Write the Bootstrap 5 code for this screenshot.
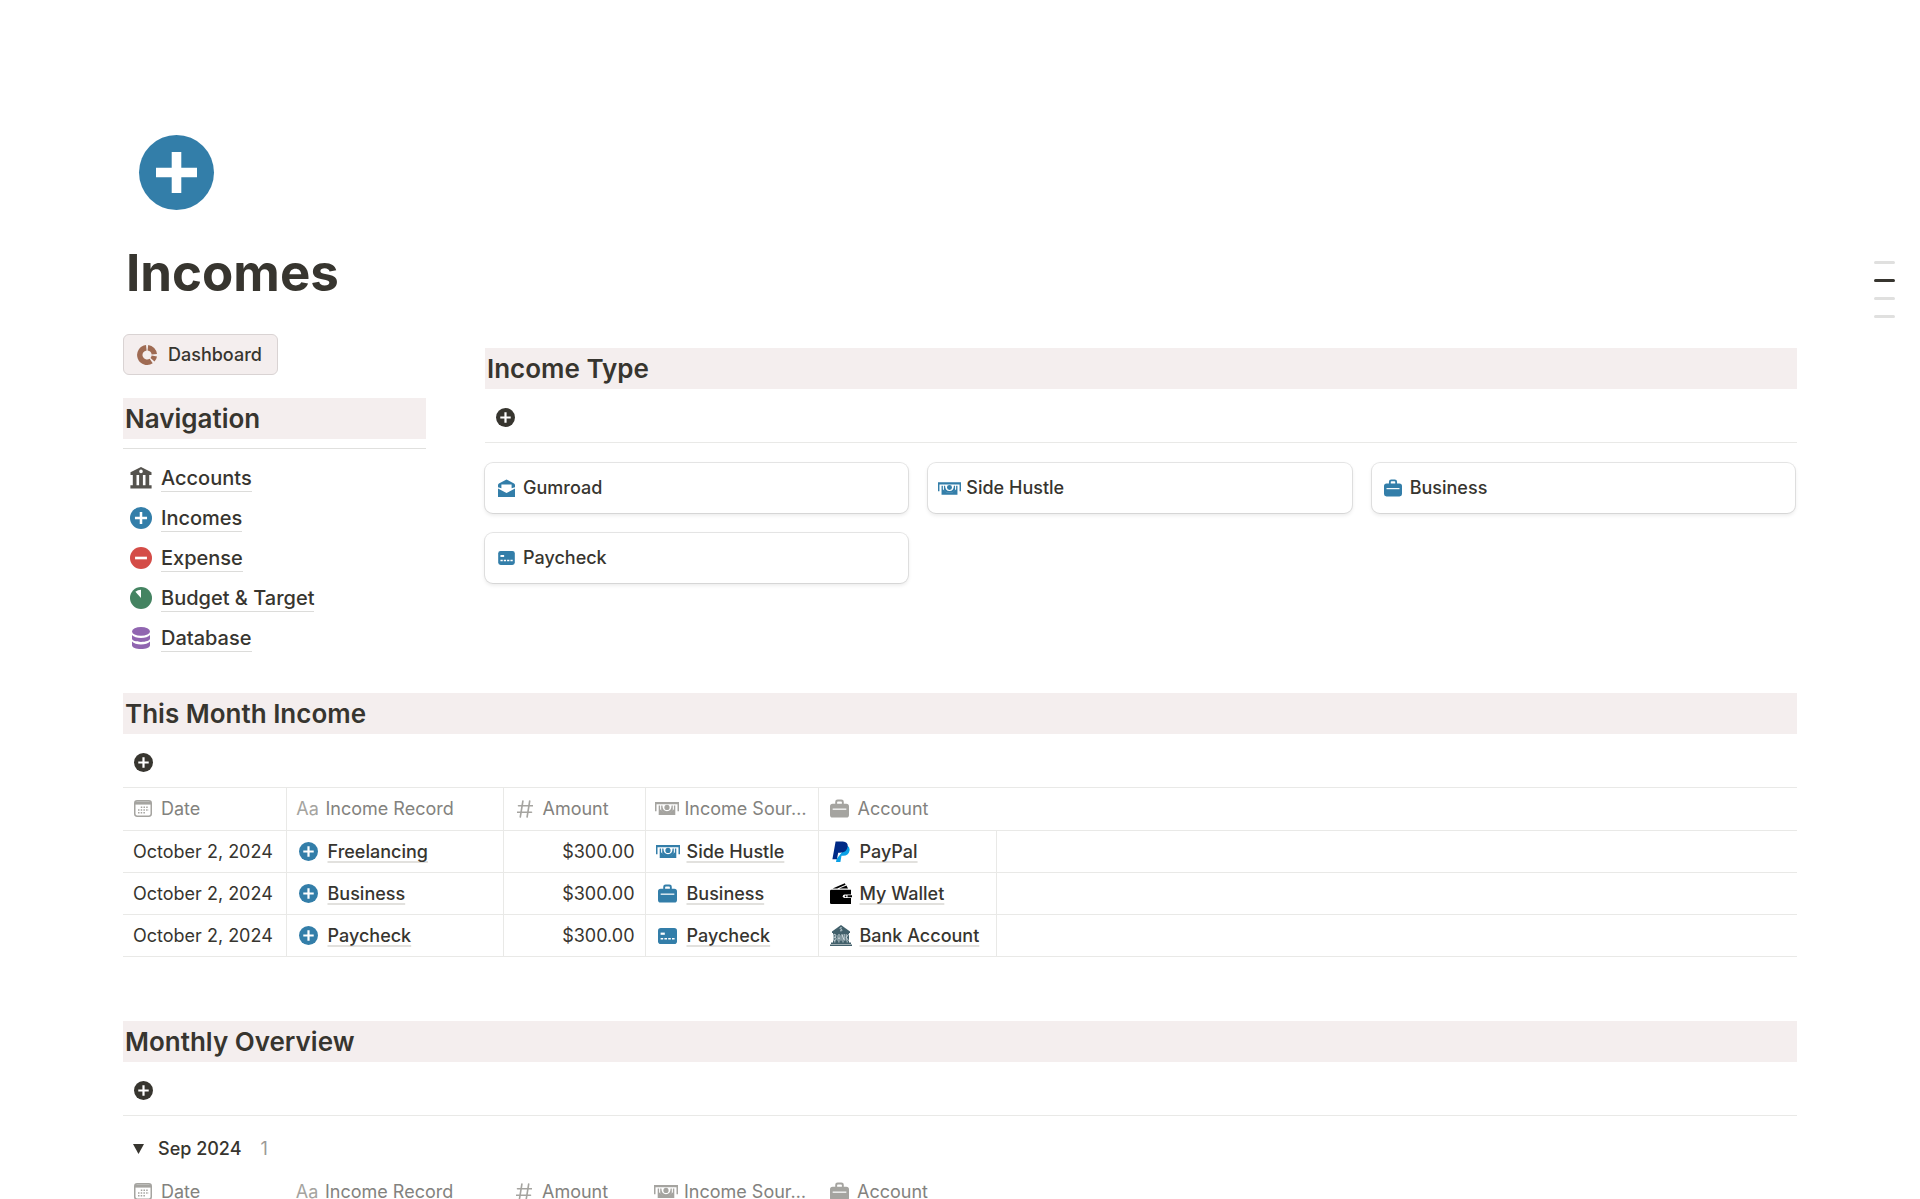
<!DOCTYPE html>
<html lang="en">
<head>
<meta charset="utf-8">
<meta name="viewport" content="width=device-width, initial-scale=1">
<title>Incomes</title>
<link href="https://cdn.jsdelivr.net/npm/bootstrap@5.3.0/dist/css/bootstrap.min.css" rel="stylesheet">
<style>
  :root { --ink:#37352f; --blue:#337ea9; --line:#e9e9e7; --tint:#f4eeee; --muted:#a5a4a0; }
  body { font-family: Inter, "Liberation Sans", sans-serif; color: var(--ink); font-size: 18px; line-height: 24px; background:#fff; }
  a { color: inherit; text-decoration: none; }
  svg { display: block; flex: none; overflow: visible; }
  .page { padding: 128px 123px 0; }
  .page-icon { margin-left: 9px; color: var(--blue); }
  .page-title { font-size: 51px; line-height: 62px; font-weight: 700; margin: 24px 0 30px; padding-left: 3px; }
  .side { flex: 0 0 303px; }
  .types { padding-top: 14px; }
  .columns { gap: 59px; margin-bottom: 35px; }
  .dash-btn { background: var(--tint); border: 1px solid #d9d3d3; border-radius: 6px; height: 41px; padding: 0 15px 0 13px; gap: 11px; font-weight: 500; color: var(--ink); margin-bottom: 23px; }
  .band { background: var(--tint); font-size: 26px; line-height: 35px; font-weight: 600; margin: 0; padding: 3px 2px; }
  .side-list { border-top: 1px solid #e0e0de; margin-top: 9px; padding-top: 9px; }
  .side-list li { height: 40px; padding-left: 7px; gap: 9px; font-size: 20px; font-weight: 500; }
  .side-list a { border-bottom: 1px solid #dcdcda; line-height: 26px; }
  .add-bar { height: 54px; padding: 4px 0 0 11px; border-bottom: 1px solid var(--line); }
  .add-btn { border: 0; background: none; padding: 0; color: var(--ink); }
  .type-grid { display: grid; grid-template-columns: repeat(3, 1fr); gap: 20px; padding-top: 20px; margin-right: 2px; }
  .type-card { height: 50px; border-radius: 8px; gap: 7px; padding-left: 11px; font-weight: 500; box-shadow: 0 0 0 1px rgba(15,15,15,.1), 0 2px 4px rgba(15,15,15,.1); }
  .slot { flex: none; width: 20px; display: flex; justify-content: center; align-items: center; }
  .records { width: 100%; table-layout: fixed; border-collapse: collapse; }
  .records th { height: 42px; font-weight: 400; color: #83827e; padding: 0 0 0 11px; white-space: nowrap; }
  .records th .slot { color: var(--muted); }
  .records td { height: 42px; padding: 1px 10px 0 11px; border-top: 1px solid var(--line); border-bottom: 1px solid var(--line); border-right: 1px solid var(--line); white-space: nowrap; }
  .records th:first-child, .records td:first-child { padding-left: 10px; }
  .records td:last-child { border-right: 0; }
  .ruled th { border-right: 1px solid var(--line); }
  .ruled th:nth-last-child(-n+2) { border-right: 0; }
  .cell { display: flex; align-items: center; gap: 8px; }
  td .cell .slot { width: 22px; }
  .in-blue { color: var(--blue); }
  td a { font-weight: 500; text-decoration: underline; text-decoration-color: #e2e1de; text-decoration-thickness: 2px; text-underline-offset: 3px; text-decoration-skip-ink: none; }
  .c-date { width: 163px; } .c-rec { width: 217px; } .c-amt { width: 142px; } .c-src { width: 173px; } .c-acc { width: 178px; }
  .month-gap { margin-top: 64px; }
  .group-row { height: 55px; padding: 12px 0 0 10px; }
  .group-toggle { margin-right: 14px; }
  .group-name { font-weight: 500; }
  .group-count { color: #9b9a97; margin-left: 19px; }
  .toc { position: absolute; top: 261px; right: 25px; width: 21px; gap: 15px; }
  .toc a { height: 3px; border-radius: 2px; background: #e0e0df; }
  .toc a.current { background: #37352f; }
</style>
<script src="https://cdn.jsdelivr.net/npm/bootstrap@5.3.0/dist/js/bootstrap.bundle.min.js"></script>
</head>
<body class="vh-100 overflow-hidden position-relative">

<svg width="0" height="0" class="position-absolute" aria-hidden="true">
  <symbol id="plus" viewBox="0 0 20 20"><circle cx="10" cy="10" r="10" fill="currentColor"/><path d="M10 4.500v11M4.500 10h11" stroke="#fff" stroke-width="2.300"/></symbol>
  <symbol id="minus" viewBox="0 0 20 20"><circle cx="10" cy="10" r="10" fill="currentColor"/><path d="M4.600 10h10.800" stroke="#fff" stroke-width="2.400"/></symbol>
  <symbol id="pie" viewBox="0 0 20 20"><circle cx="10" cy="10" r="10" fill="currentColor"/><path d="M10 10V2.400A7.600 7.600 0 0 0 4.900 4.400z" fill="#fff"/></symbol>
  <symbol id="donut" viewBox="0 0 20 20"><g fill="none" stroke="currentColor" stroke-width="5.400"><path d="M9.300 2.700A7.300 7.300 0 1 0 14.200 16"/><path d="M10.900 2.700A7.300 7.300 0 0 1 17.300 9.300"/><path d="M17.300 11A7.300 7.300 0 0 1 15.500 14.800"/></g></symbol>
  <symbol id="bank" viewBox="0 0 22 22"><path fill="currentColor" fill-rule="evenodd" d="M11 0 21.500 5.200V8H.5V5.200zM11 2.600a1.800 1.800 0 1 0 0 3.600 1.800 1.800 0 0 0 0-3.600z"/><path fill="currentColor" d="M2.800 7.500h3.700v11H2.800zM9.100 7.500h3.800v11H9.100zM15.500 7.500h3.700v11h-3.700zM.4 18.200h21.200v3.300H.4z"/></symbol>
  <symbol id="stack" viewBox="0 0 18 22"><g fill="currentColor"><ellipse cx="9" cy="4.400" rx="9" ry="4.400"/><path d="M0 8c1.600 2 5 2.900 9 2.900S16.400 10 18 8v3.600c0 2-4 3.400-9 3.400s-9-1.400-9-3.400z"/><path d="M0 14.600c1.600 2 5 2.900 9 2.900s7.400-.9 9-2.900v3.600c0 2.200-4 3.800-9 3.800s-9-1.600-9-3.800z"/></g></symbol>
  <symbol id="mail" viewBox="0 0 18 20"><path fill="currentColor" d="M9 .5 17 4.700q1 .6 1 1.600V19H0V6.300q0-1 1-1.600z"/><path fill="#fff" d="M3.600 5.800h10.800v4L18 8.600V10l-9 4.800L0 10V8.600l3.600 1.200z"/></symbol>
  <symbol id="cash" viewBox="0 0 24 13"><path fill="currentColor" d="M0 0h24v9.300h-1.500V2.300h-21v7H0z"/><path fill="currentColor" d="M3.700 3.500h1.400v3.800l3.600 3.400h6.600l3.600-3.400V3.500h1.400V13H3.700z"/><path fill="currentColor" d="M6.200 3.500h1.200q.2 5.700 4.600 5.700t4.600-5.700h1.200v5.200L15.500 11h-7L6.200 8.700z"/><circle cx="12" cy="5.400" r="2.600" fill="currentColor"/></symbol>
  <symbol id="case" viewBox="0 0 20 20"><path fill="currentColor" d="M5.500 5V3Q5.500.5 8 .5h4q2.500 0 2.500 2.500v2h2.700Q20 5 20 7.800v9q0 2.700-2.800 2.700H2.800Q0 19.500 0 16.800v-9Q0 5 2.800 5zm2 0h5V3.300q0-.8-.8-.8H8.300q-.8 0-.8.800z"/><path d="M2.800 10.700h14.400" stroke="#fff" stroke-width="1.300"/></symbol>
  <symbol id="credit" viewBox="0 0 19 16"><rect width="19" height="16" rx="2.800" fill="currentColor"/><path d="M2.600 5.700h4.200" stroke="#fff" stroke-width="2.200"/><path d="M2.600 10.800h14" stroke="#fff" stroke-width="1.600" stroke-dasharray="2.600 1.200"/></symbol>
  <symbol id="calendar" viewBox="0 0 18 17"><rect x=".75" y=".75" width="16.500" height="15.500" rx="2.400" fill="none" stroke="currentColor" stroke-width="1.500"/><path d="M1 1.500h16V4.600H1z" fill="currentColor"/><path d="M6.800 7.300h8M4 10h11M4 12.700h8" stroke="currentColor" stroke-width="1.500" stroke-dasharray="1.500 1.200"/></symbol>
  <symbol id="hash" viewBox="0 0 16 18"><path d="M5.900 1 3.300 17M12.700 1l-2.600 16M1.500 5.800h14M.5 12.200h14" stroke="currentColor" stroke-width="1.600" stroke-linecap="round"/></symbol>
  <symbol id="paypal" viewBox="0 0 18 21"><path fill="#0aa0e6" d="M15.200 4.500q3 1.600 2.300 5.200-1 5.100-6.400 5.100H9.500L8.400 21H4l.6-3z"/><path fill="#002a86" d="M3.600.5h7.200q5.400.3 4.900 5-.9 6.200-7.600 6.200H6.200L4.900 18.300H.4z"/></symbol>
  <symbol id="wallet" viewBox="0 0 22 21"><path d="M0 8Q0 6.800 1.300 6.800H21V21H1.300Q0 21 0 19.700z"/><path d="M14.600 11.500H22v3.600h-7.400q-1.800 0-1.800-1.800t1.800-1.800z" fill="#fff"/><circle cx="15.600" cy="13.300" r=".9"/><path d="M17.500 12.300H22v2h-4.500zM2.600 5.600 14.800.2l.8 1.600-8.400 3.800zM9.300 5.600l7.200-3.100 1.500 3.100z"/></symbol>
  <symbol id="bankhouse" viewBox="0 0 22 21"><g fill="#42606b"><path d="M11 0 20 6.500V8H2V6.500z"/><path d="M3 8h16v10H3z"/><path d="M1 17.400h20V19H1zM0 19.500h22V21H0z"/></g><path d="M4.800 15.500v2M8.900 15.500v2M13 15.500v2M17.200 15.500v2" stroke="#b9c9cf" stroke-width="1"/><path d="M3.700 9.400v6h1.200q1.200-.2 1.200-1.600T4.900 12.300H3.700m0-2.900h1.200q1 .1 1 1.400t-1 1.500M8 15.700v-5l1-1.300 1 1.300v5m-2-2.500h2M12 15.700V9.400l2.200 6V9M16.200 9.200v6.500M18.600 9.200l-2.300 3.300 2.300 3.200" fill="none" stroke="#e6eef0" stroke-width=".8"/><path d="M11.900 2.900q-1.800-.8-1.800.5c0 1 1.900.6 1.900 1.800q-.2 1.300-2 .5" fill="none" stroke="#dbe6ea" stroke-width=".8"/></symbol>
</svg>

<nav class="toc d-flex flex-column" aria-label="Contents">
  <a href="#nav-head"></a><a href="#type-head" class="current"></a><a href="#month-head"></a><a href="#overview-head"></a>
</nav>

<main class="page">
  <svg class="page-icon" width="90" height="90" viewBox="0 0 90 90"><circle cx="44.500" cy="44.500" r="37.500" fill="currentColor"/><path d="M44.500 24v41M24 44.500h41" stroke="#fff" stroke-width="9.600"/></svg>
  <h1 class="page-title">Incomes</h1>

  <div class="columns d-flex align-items-start">
    <aside class="side">
      <button type="button" class="dash-btn d-inline-flex align-items-center"><svg width="20" height="20" color="#9f6b53"><use href="#donut"/></svg>Dashboard</button>
      <h2 class="band" id="nav-head">Navigation</h2>
      <ul class="side-list list-unstyled mb-0">
        <li class="d-flex align-items-center"><svg width="22" height="22" color="#55534e"><use href="#bank"/></svg><a href="#">Accounts</a></li>
        <li class="d-flex align-items-center"><svg width="22" height="22" color="#337ea9"><use href="#plus"/></svg><a href="#">Incomes</a></li>
        <li class="d-flex align-items-center"><svg width="22" height="22" color="#d44c47"><use href="#minus"/></svg><a href="#">Expense</a></li>
        <li class="d-flex align-items-center"><svg width="22" height="22" color="#448361"><use href="#pie"/></svg><a href="#">Budget &amp; Target</a></li>
        <li class="d-flex align-items-center"><svg width="22" height="22" color="#9065b0"><use href="#stack"/></svg><a href="#">Database</a></li>
      </ul>
    </aside>

    <section class="types flex-grow-1">
      <h2 class="band" id="type-head">Income Type</h2>
      <div class="add-bar d-flex align-items-center"><button type="button" class="add-btn" aria-label="Add"><svg width="19" height="19"><use href="#plus"/></svg></button></div>
      <div class="type-grid">
        <a href="#" class="type-card d-flex align-items-center"><span class="slot in-blue"><svg width="17" height="19"><use href="#mail"/></svg></span>Gumroad</a>
        <a href="#" class="type-card d-flex align-items-center"><span class="slot in-blue"><svg width="23" height="13"><use href="#cash"/></svg></span>Side Hustle</a>
        <a href="#" class="type-card d-flex align-items-center"><span class="slot in-blue"><svg width="18" height="18"><use href="#case"/></svg></span>Business</a>
        <a href="#" class="type-card d-flex align-items-center"><span class="slot in-blue"><svg width="17" height="14"><use href="#credit"/></svg></span>Paycheck</a>
      </div>
    </section>
  </div>

  <section>
    <h2 class="band" id="month-head">This Month Income</h2>
    <div class="add-bar d-flex align-items-center"><button type="button" class="add-btn" aria-label="Add"><svg width="19" height="19"><use href="#plus"/></svg></button></div>
    <table class="records ruled">
      <colgroup><col class="c-date"><col class="c-rec"><col class="c-amt"><col class="c-src"><col class="c-acc"><col></colgroup>
      <thead><tr>
        <th><div class="cell"><span class="slot"><svg width="18" height="17"><use href="#calendar"/></svg></span>Date</div></th>
        <th><div class="cell"><span class="slot">Aa</span>Income Record</div></th>
        <th><div class="cell"><span class="slot"><svg width="16" height="18"><use href="#hash"/></svg></span>Amount</div></th>
        <th><div class="cell"><span class="slot"><svg width="24" height="13"><use href="#cash"/></svg></span>Income Sour…</div></th>
        <th><div class="cell"><span class="slot"><svg width="19" height="19"><use href="#case"/></svg></span>Account</div></th>
        <th></th>
      </tr></thead>
      <tbody>
        <tr><td>October 2, 2024</td><td><div class="cell"><span class="slot in-blue"><svg width="19" height="19"><use href="#plus"/></svg></span><a href="#">Freelancing</a></div></td><td class="text-end">$300.00</td><td><div class="cell"><span class="slot in-blue"><svg width="24" height="13"><use href="#cash"/></svg></span><a href="#">Side Hustle</a></div></td><td><div class="cell"><span class="slot"><svg width="18" height="21"><use href="#paypal"/></svg></span><a href="#">PayPal</a></div></td><td></td></tr>
        <tr><td>October 2, 2024</td><td><div class="cell"><span class="slot in-blue"><svg width="19" height="19"><use href="#plus"/></svg></span><a href="#">Business</a></div></td><td class="text-end">$300.00</td><td><div class="cell"><span class="slot in-blue"><svg width="19" height="19"><use href="#case"/></svg></span><a href="#">Business</a></div></td><td><div class="cell"><span class="slot"><svg width="22" height="21"><use href="#wallet"/></svg></span><a href="#">My Wallet</a></div></td><td></td></tr>
        <tr><td>October 2, 2024</td><td><div class="cell"><span class="slot in-blue"><svg width="19" height="19"><use href="#plus"/></svg></span><a href="#">Paycheck</a></div></td><td class="text-end">$300.00</td><td><div class="cell"><span class="slot in-blue"><svg width="19" height="16"><use href="#credit"/></svg></span><a href="#">Paycheck</a></div></td><td><div class="cell"><span class="slot"><svg width="22" height="21"><use href="#bankhouse"/></svg></span><a href="#">Bank Account</a></div></td><td></td></tr>
      </tbody>
    </table>
  </section>

  <section class="month-gap">
    <h2 class="band" id="overview-head">Monthly Overview</h2>
    <div class="add-bar d-flex align-items-center"><button type="button" class="add-btn" aria-label="Add"><svg width="19" height="19"><use href="#plus"/></svg></button></div>
    <div class="group-row d-flex align-items-center">
      <button type="button" class="add-btn group-toggle" aria-label="Collapse group"><svg width="11" height="10" viewBox="0 0 10 9"><path d="M0 0h10L5 9z" fill="#37352f"/></svg></button>
      <span class="group-name">Sep 2024</span><span class="group-count">1</span>
    </div>
    <table class="records">
      <colgroup><col class="c-date"><col class="c-rec"><col class="c-amt"><col class="c-src"><col class="c-acc"><col></colgroup>
      <thead><tr>
        <th><div class="cell"><span class="slot"><svg width="18" height="17"><use href="#calendar"/></svg></span>Date</div></th>
        <th><div class="cell"><span class="slot">Aa</span>Income Record</div></th>
        <th><div class="cell"><span class="slot"><svg width="16" height="18"><use href="#hash"/></svg></span>Amount</div></th>
        <th><div class="cell"><span class="slot"><svg width="24" height="13"><use href="#cash"/></svg></span>Income Sour…</div></th>
        <th><div class="cell"><span class="slot"><svg width="19" height="19"><use href="#case"/></svg></span>Account</div></th>
        <th></th>
      </tr></thead>
    </table>
  </section>
</main>
</body>
</html>
